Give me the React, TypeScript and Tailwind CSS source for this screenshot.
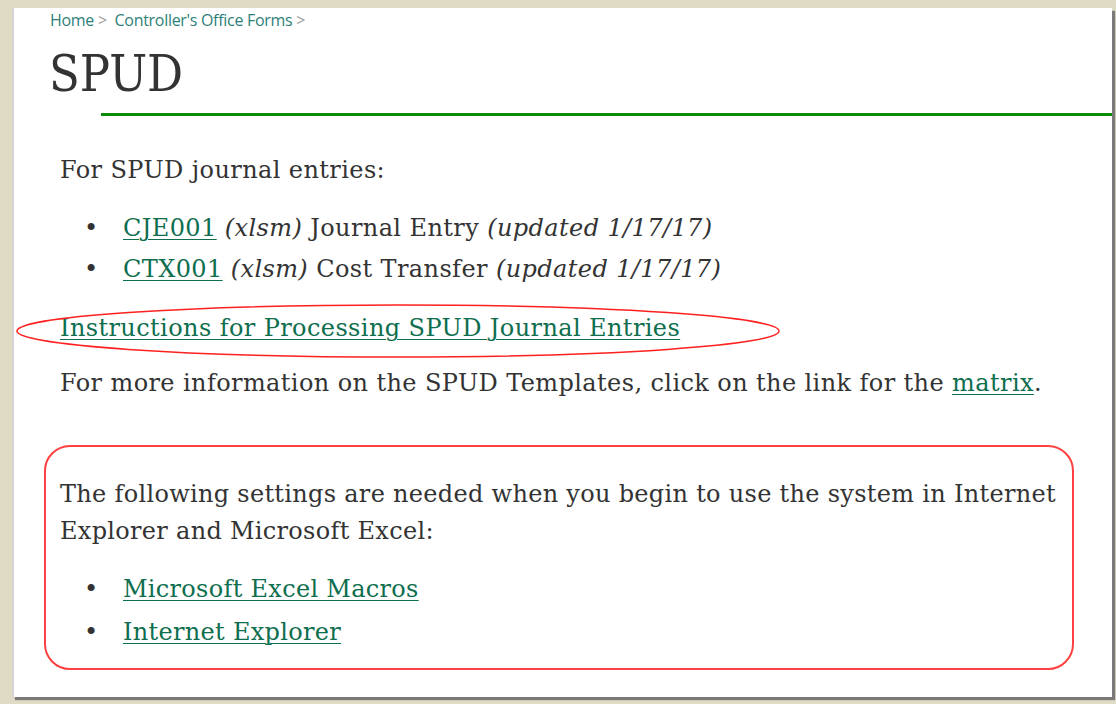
import React from 'react'

const serif = { fontFamily: 'Georgia, "DejaVu Serif", serif' }

function Bullet({ children }: { children: React.ReactNode }) {
  return (
    <li className="flex items-baseline">
      <span className="w-[63px] shrink-0 pl-[24px] text-[#333]">•</span>
      <span>{children}</span>
    </li>
  )
}

function DocLink({ children }: { children: React.ReactNode }) {
  return (
    <a href="#" className="text-[#0e6e4e] underline underline-offset-[3px] decoration-1">
      {children}
    </a>
  )
}

export default function App() {
  return (
    <div className="w-[1116px] h-[704px] bg-[#e0dbc5] pt-2 pl-3 overflow-hidden">
      <div className="relative w-[1100px] h-[689px] bg-white border-l-2 border-[#d4d4d4] shadow-[3px_3px_1px_#7a7a7a]">
        {/* breadcrumb */}
        <div className="pl-[36px] pt-[3px] text-[16px] leading-[18px] tracking-[-0.3px]" style={{ fontFamily: '"Open Sans", sans-serif' }}>
          <a href="#" className="text-[#2e7f7a]">Home</a>
          <span className="text-[#999]"> &gt; </span>
          <a href="#" className="ml-1 text-[#2e7f7a]">Controller's Office Forms</a>
          <span className="text-[#999]"> &gt;</span>
        </div>

        <h1
          className="pl-[35px] mt-[18px] text-[50px] leading-[54px] text-[#333] font-light"
          style={{ fontFamily: '"DejaVu Serif Condensed", "DejaVu Serif", serif' }}
        >
          SPUD
        </h1>
        <div className="ml-[87px] mt-[12px] h-[3px] bg-[#0a8a0a]" />

        <div className="pl-[46px] pr-[40px] text-[24px] tracking-[0.4px] text-[#333]" style={serif}>
          <p className="mt-[39px] leading-[30px]">For SPUD journal entries:</p>
          <ul className="mt-[28px] flex flex-col gap-[11px] leading-[30px]">
            <Bullet>
              <DocLink>CJE001</DocLink> <i>(xlsm)</i> Journal Entry <i>(updated 1/17/17)</i>
            </Bullet>
            <Bullet>
              <DocLink>CTX001</DocLink> <i>(xlsm)</i> Cost Transfer <i>(updated 1/17/17)</i>
            </Bullet>
          </ul>
          <p className="mt-[29px] leading-[30px]">
            <DocLink>Instructions for Processing SPUD Journal Entries</DocLink>
          </p>
          <p className="mt-[25px] leading-[30px]">
            For more information on the SPUD Templates, click on the link for the <DocLink>matrix</DocLink>.
          </p>

          {/* settings box */}
          <div className="-ml-[16px] mr-[-2px] mt-[47px] h-[225px] border-2 border-[#ff4040] rounded-[26px] pl-[14px] pr-0 pt-[29px] tracking-[0.3px]">
            <p className="leading-[37px]">
              The following settings are needed when you begin to use the system in Internet Explorer and Microsoft Excel:
            </p>
            <ul className="mt-[24px] flex flex-col gap-[13px] leading-[30px]">
              <Bullet>
                <DocLink>Microsoft Excel Macros</DocLink>
              </Bullet>
              <Bullet>
                <DocLink>Internet Explorer</DocLink>
              </Bullet>
            </ul>
          </div>
        </div>

        {/* red ellipse drawn around the instructions link */}
        <svg className="absolute left-0 top-[295px] pointer-events-none" width="770" height="56" viewBox="0 0 770 56">
          <ellipse cx="384" cy="28" rx="381" ry="26" fill="none" stroke="#ff2020" strokeWidth="1.5" />
        </svg>
      </div>
    </div>
  )
}
